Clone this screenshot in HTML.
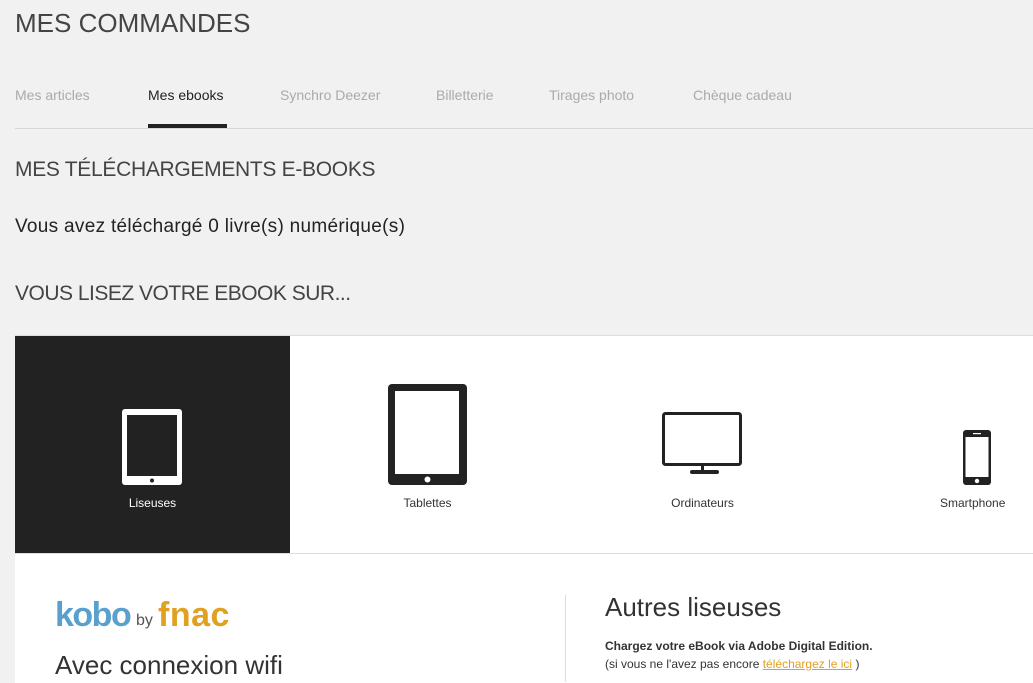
<!DOCTYPE html>
<html><head><meta charset="utf-8"><style>
body{margin:0;width:1033px;height:682px;overflow:hidden;background:#f1f1f1;font-family:"Liberation Sans",sans-serif;color:#222;position:relative}
.a{position:absolute;white-space:nowrap}
</style></head><body>
<div class="a" style="left:15px;top:8px;font-size:26px;color:#444">MES COMMANDES</div>
<div class="a" style="left:15px;top:87px;font-size:14px;color:#aaa">Mes articles</div>
<div class="a" style="left:148px;top:87px;font-size:14px;color:#222">Mes ebooks</div>
<div class="a" style="left:148px;top:124px;width:79px;height:4px;background:#222"></div>
<div class="a" style="left:280px;top:87px;font-size:14px;color:#aaa">Synchro Deezer</div>
<div class="a" style="left:436px;top:87px;font-size:14px;color:#aaa">Billetterie</div>
<div class="a" style="left:549px;top:87px;font-size:14px;color:#aaa">Tirages photo</div>
<div class="a" style="left:693px;top:87px;font-size:14px;color:#aaa">Chèque cadeau</div>
<div class="a" style="left:15px;top:128px;width:1018px;height:1px;background:#d6d6d6"></div>
<div class="a" style="left:15px;top:158px;font-size:21px;color:#444;letter-spacing:-0.3px">MES TÉLÉCHARGEMENTS E-BOOKS</div>
<div class="a" style="left:15px;top:216px;font-size:19px;color:#222;letter-spacing:0.3px">Vous avez téléchargé 0 livre(s) numérique(s)</div>
<div class="a" style="left:15px;top:282px;font-size:21px;color:#444;letter-spacing:-0.5px">VOUS LISEZ VOTRE EBOOK SUR...</div>
<div class="a" style="left:15px;top:335px;width:1018px;height:347px;background:#fff;border-top:1px solid #ddd"></div>
<div class="a" style="left:15px;top:336px;width:275px;height:217px;background:#222"></div>
<div class="a" style="left:15px;top:553px;width:1018px;height:1px;background:#ddd"></div>
<svg class="a" style="left:122px;top:409px" width="60" height="76"><rect x="0" y="0" width="60" height="76" rx="3" fill="#fff"/><rect x="5" y="6" width="50" height="61" fill="#222"/><circle cx="30" cy="71.5" r="2" fill="#222"/></svg>
<div class="a" style="left:15px;top:496px;width:275px;text-align:center;font-size:12px;color:#fff">Liseuses</div>
<svg class="a" style="left:388px;top:384px" width="79" height="101"><rect width="79" height="101" rx="4" fill="#222"/><rect x="7" y="7" width="64" height="83" fill="#fff"/><circle cx="39.5" cy="95.5" r="3" fill="#fff"/></svg>
<div class="a" style="left:290px;top:496px;width:275px;text-align:center;font-size:12px;color:#333">Tablettes</div>
<svg class="a" style="left:662px;top:412px" width="81" height="63"><rect x="1.5" y="1.5" width="77" height="51" rx="2" fill="none" stroke="#222" stroke-width="3"/><rect x="39" y="53" width="3" height="5" fill="#222"/><rect x="28" y="58" width="29" height="4" rx="2" fill="#222"/></svg>
<div class="a" style="left:565px;top:496px;width:275px;text-align:center;font-size:12px;color:#333">Ordinateurs</div>
<svg class="a" style="left:963px;top:430px" width="28" height="55"><rect width="28" height="55" rx="3" fill="#222"/><rect x="2.5" y="7" width="23" height="40" fill="#fff"/><rect x="10" y="3" width="8" height="1.2" fill="#fff"/><circle cx="14" cy="51" r="2.2" fill="#fff"/></svg>
<div class="a" style="left:940px;top:496px;font-size:12px;color:#333">Smartphone</div>
<div class="a" style="left:55px;top:596px;font-size:34px;font-weight:bold;color:#5aa0cc;letter-spacing:-1.5px">kobo</div>
<div class="a" style="left:136px;top:612px;font-size:16px;color:#555">by</div>
<div class="a" style="left:158px;top:596px;font-size:34px;font-weight:bold;color:#e0a020;letter-spacing:0.5px">fnac</div>
<div class="a" style="left:55px;top:650px;font-size:26px;color:#333">Avec connexion wifi</div>
<div class="a" style="left:565px;top:595px;width:1px;height:87px;background:#ddd"></div>
<div class="a" style="left:605px;top:592px;font-size:26px;color:#333">Autres liseuses</div>
<div class="a" style="left:605px;top:639px;font-size:12px;color:#333;font-weight:bold">Chargez votre eBook via Adobe Digital Edition.</div>
<div class="a" style="left:605px;top:657px;font-size:12px;color:#333">(si vous ne l'avez pas encore <span style="color:#e0a020;text-decoration:underline">téléchargez le ici</span> )</div>
</body></html>
